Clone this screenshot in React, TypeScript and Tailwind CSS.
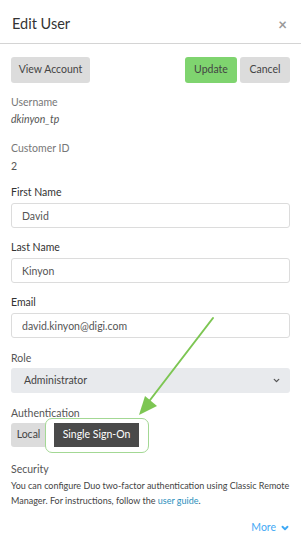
import { ChevronDown } from "lucide-react";

function Field({ label, value }: { label: string; value: string }) {
  return (
    <div className="mt-[12px]">
      <div className="text-[10.5px] leading-[14px] text-[#333]">{label}</div>
      <input
        readOnly
        value={value}
        className="mt-[4px] block h-[25px] w-full rounded-[3px] border border-[#dcdcdc] bg-white px-[10px] text-[10.5px] text-[#555] outline-none"
      />
    </div>
  );
}

export default function App() {
  return (
    <div className="relative h-[537px] w-[301px] overflow-hidden bg-white font-['Lato',sans-serif] text-[#333]">
      {/* Header */}
      <div className="flex h-[44px] items-center justify-between border-b border-[#d4d4d4] pl-[12px] pr-[14px] pt-[5px]">
        <h1 className="text-[14.5px] font-normal">Edit User</h1>
        <span className="text-[15px] font-bold leading-none text-[#999]">×</span>
      </div>

      <div className="px-[11px] pt-[13px]">
        {/* Actions */}
        <div className="flex items-center">
          <button className="h-[26px] w-[79px] rounded-[3px] bg-[#dcdcdc] text-[10.5px] text-[#444]">
            View Account
          </button>
          <div className="ml-auto flex gap-[3px]">
            <button className="h-[26px] w-[52px] rounded-[3px] bg-[#7fd46f] text-[10.5px] text-[#444]">
              Update
            </button>
            <button className="h-[26px] w-[50px] rounded-[3px] bg-[#dcdcdc] text-[10.5px] text-[#444]">
              Cancel
            </button>
          </div>
        </div>

        {/* Read-only */}
        <div className="mt-[12px] text-[10.5px] leading-[14px] text-[#777]">Username</div>
        <div className="mt-[3px] text-[10.5px] italic leading-[14px] text-[#555]">dkinyon_tp</div>
        <div className="mt-[15px] text-[10.5px] leading-[14px] text-[#777]">Customer ID</div>
        <div className="mt-[4px] text-[10.5px] leading-[14px] text-[#555]">2</div>

        <Field label="First Name" value="David" />
        <Field label="Last Name" value="Kinyon" />
        <Field label="Email" value="david.kinyon@digi.com" />

        {/* Role */}
        <div className="mt-[13px] text-[10.5px] leading-[14px] text-[#555]">Role</div>
        <div className="mt-[3px] flex h-[25px] items-center justify-between rounded-[3px] bg-[#e8eaed] pl-[13px] pr-[9px] text-[10.5px] text-[#444]">
          <span>Administrator</span>
          <ChevronDown size={9} strokeWidth={3.5} className="text-[#555]" />
        </div>

        {/* Authentication */}
        <div className="mt-[13px] text-[10.5px] leading-[14px] text-[#555]">Authentication</div>
        <div className="mt-[3px] flex items-center">
          <button className="h-[24px] w-[43px] rounded-l-[3px] bg-[#dcdcdc] pr-[8px] text-[10.5px] text-[#444]">
            Local
          </button>
          <div className="relative">
            <span className="absolute -bottom-[6px] -left-[9px] -right-[10px] -top-[5px] rounded-[7px] border border-[#a3d894] bg-white" />
            <button className="relative block h-[24px] w-[85px] bg-[#4a4a4a] text-[10.5px] text-white">
              Single Sign-On
            </button>
          </div>
        </div>

        {/* Security */}
        <div className="mt-[14px] text-[10.5px] leading-[16px] text-[#555]">Security</div>
        <p className="mt-[1px] text-[9px] leading-[15px] text-[#444]">
          You can configure Duo two-factor authentication using Classic Remote Manager. For instructions, follow
          the <span className="text-[#2a8fbd]">user guide</span>.
        </p>

        <div className="mt-[12px] flex items-center justify-end gap-[4px] text-[10.5px] text-[#3fa9f5]">
          <span>More</span>
          <ChevronDown size={10} strokeWidth={4.5} />
        </div>
      </div>

      {/* Annotation arrow */}
      <svg className="pointer-events-none absolute left-0 top-0" width="301" height="537">
        <line x1="213" y1="318" x2="147" y2="404" stroke="#7dc653" strokeWidth="2" strokeLinecap="round" />
        <polygon points="139,415 145,396 157,406" fill="#7dc653" />
      </svg>
    </div>
  );
}
